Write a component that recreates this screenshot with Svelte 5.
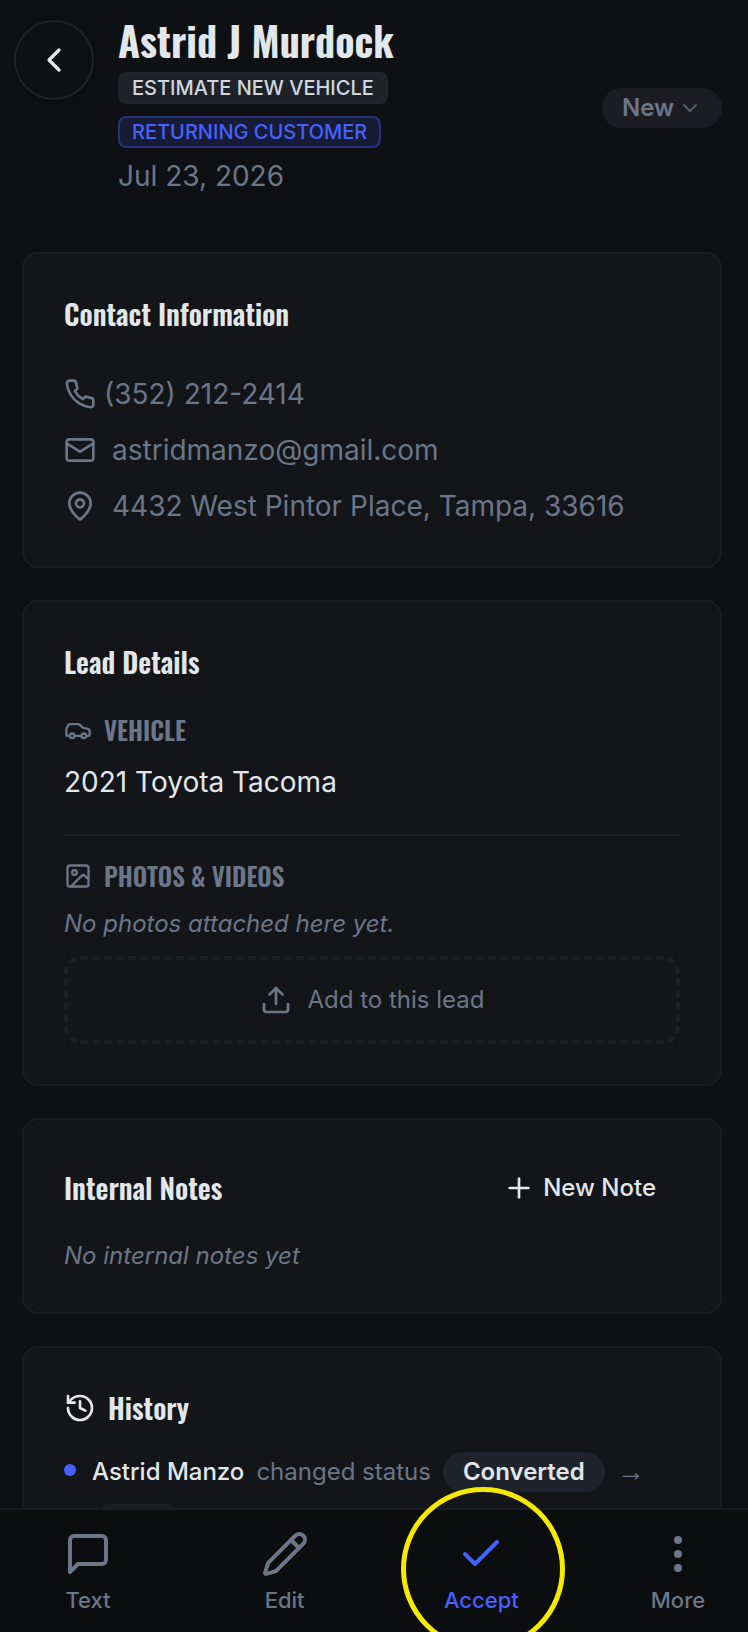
<script>
  let status = "New";
  const statuses = ["New", "Accepted", "Converted", "Closed"];

  const lead = {
    name: "Astrid J Murdock",
    date: "Jul 23, 2026",
    phone: "(352) 212-2414",
    email: "astridmanzo@gmail.com",
    address: "4432 West Pintor Place, Tampa, 33616",
    vehicle: "2021 Toyota Tacoma",
  };
</script>

<svelte:head>
  <title>{lead.name}</title>
</svelte:head>

<header class="top">
  <button class="back" aria-label="Back">
    <svg class="icon" viewBox="0 0 24 24"><path d="m15 18-6-6 6-6" /></svg>
  </button>
  <div class="who">
    <h1>{lead.name}</h1>
    <div class="badges">
      <span class="badge">ESTIMATE NEW VEHICLE</span>
      <span class="badge returning">RETURNING CUSTOMER</span>
    </div>
    <p>{lead.date}</p>
  </div>
  <div class="status">
    <select aria-label="Status" bind:value={status}>
      {#each statuses as s}
        <option value={s}>{s}</option>
      {/each}
    </select>
    <svg class="icon" viewBox="0 0 24 24"><path d="m6 9 6 6 6-6" /></svg>
  </div>
</header>

<main>
  <section class="card">
    <h2>Contact Information</h2>
    <div class="contact">
      <a class="phone" href="tel:3522122414">
        <svg class="icon" viewBox="0 0 24 24"><path d="M22 16.92v3a2 2 0 0 1-2.18 2 19.79 19.79 0 0 1-8.63-3.07 19.5 19.5 0 0 1-6-6 19.79 19.79 0 0 1-3.07-8.67A2 2 0 0 1 4.11 2h3a2 2 0 0 1 2 1.72 12.84 12.84 0 0 0 .7 2.81 2 2 0 0 1-.45 2.11L8.09 9.91a16 16 0 0 0 6 6l1.27-1.27a2 2 0 0 1 2.11-.45 12.84 12.84 0 0 0 2.81.7A2 2 0 0 1 22 16.92z" /></svg>
        {lead.phone}
      </a>
      <a href="mailto:{lead.email}">
        <svg class="icon" viewBox="0 0 24 24"><rect x="2" y="4" width="20" height="16" rx="2" /><path d="m22 7-8.97 5.7a1.94 1.94 0 0 1-2.06 0L2 7" /></svg>
        {lead.email}
      </a>
      <div class="line">
        <svg class="icon" viewBox="0 0 24 24"><path d="M20 10c0 4.993-5.539 10.193-7.399 11.799a1 1 0 0 1-1.202 0C9.539 20.193 4 14.993 4 10a8 8 0 0 1 16 0" /><circle cx="12" cy="10" r="3" /></svg>
        {lead.address}
      </div>
    </div>
  </section>

  <section class="card">
    <h2>Lead Details</h2>
    <div class="vehicle">
      <h3>
        <svg class="icon" viewBox="0 0 24 24"><path d="M19 17h2c.6 0 1-.4 1-1v-3c0-.9-.7-1.7-1.5-1.9C18.7 10.6 16 10 16 10s-1.3-1.4-2.2-2.3c-.5-.4-1.1-.7-1.8-.7H5c-.6 0-1.1.4-1.4.9l-1.4 2.9A3.7 3.7 0 0 0 2 12v4c0 .6.4 1 1 1h2" /><circle cx="7" cy="17" r="2" /><path d="M9 17h6" /><circle cx="17" cy="17" r="2" /></svg>
        VEHICLE
      </h3>
      <p>{lead.vehicle}</p>
    </div>
    <div class="photos">
      <h3>
        <svg class="icon" viewBox="0 0 24 24"><rect x="3" y="3" width="18" height="18" rx="2" /><circle cx="9" cy="9" r="2" /><path d="m21 15-3.086-3.086a2 2 0 0 0-2.828 0L6 21" /></svg>
        PHOTOS &amp; VIDEOS
      </h3>
      <p class="empty">No photos attached here yet.</p>
      <button class="upload">
        <svg class="icon" viewBox="0 0 24 24"><path d="M21 15v4a2 2 0 0 1-2 2H5a2 2 0 0 1-2-2v-4" /><path d="m17 8-5-5-5 5" /><path d="M12 3v12" /></svg>
        Add to this lead
      </button>
    </div>
  </section>

  <section class="card">
    <div class="notes-head">
      <h2>Internal Notes</h2>
      <button class="new-note">
        <svg class="icon" viewBox="0 0 24 24"><path d="M5 12h14" /><path d="M12 5v14" /></svg>
        New Note
      </button>
    </div>
    <p class="empty">No internal notes yet</p>
  </section>

  <section class="card">
    <h2 class="history-title">
      <svg class="icon" viewBox="0 0 24 24"><path d="M3 12a9 9 0 1 0 9-9 9.75 9.75 0 0 0-6.74 2.74L3 8" /><path d="M3 3v5h5" /><path d="M12 7v5l4 2" /></svg>
      History
    </h2>
    <div class="event">
      <span class="dot"></span>
      <div class="event-text">
        <strong>Astrid Manzo</strong>
        <span>changed status</span>
        <span class="pill converted">Converted</span>
        <span class="arrow">→</span>
        <span class="pill">New</span>
      </div>
    </div>
  </section>
</main>

<nav>
  <button>
    <svg class="icon" viewBox="0 0 24 24"><path d="M21 15a2 2 0 0 1-2 2H7l-4 4V5a2 2 0 0 1 2-2h14a2 2 0 0 1 2 2z" /></svg>
    Text
  </button>
  <button>
    <svg class="icon" viewBox="0 0 24 24"><path d="M21.174 6.812a1 1 0 0 0-3.986-3.987L3.842 16.174a2 2 0 0 0-.5.83l-1.321 4.352a.5.5 0 0 0 .623.622l4.353-1.32a2 2 0 0 0 .83-.497z" /><path d="m15 5 4 4" /></svg>
    Edit
  </button>
  <button class="accept">
    <svg class="icon" viewBox="0 0 24 24"><path d="M20 6 9 17l-5-5" /></svg>
    Accept
    <span class="ring"></span>
  </button>
  <button>
    <svg class="icon" viewBox="0 0 24 24"><circle cx="12" cy="12" r="1" /><circle cx="12" cy="5" r="1" /><circle cx="12" cy="19" r="1" /></svg>
    More
  </button>
</nav>

<style>
  :global(body) {
    background: #0f1013;
    color: #e1e7eb;
    font-family: Inter, "Liberation Sans", sans-serif;
    font-size: 28px;
    line-height: 40px;
  }
  h1,
  h2,
  h3,
  p {
    margin: 0;
  }
  h1,
  h2,
  h3 {
    font-family: Oswald, "Roboto Condensed", "Liberation Sans Narrow", sans-serif;
    font-weight: 600;
  }
  h1 {
    margin-bottom: 4px;
    font-size: 40px;
    font-weight: 700;
    line-height: 40px;
  }
  h2 {
    font-size: 28px;
    line-height: 40px;
  }
  h3 {
    display: flex;
    align-items: center;
    gap: 12px;
    font-size: 25px;
    line-height: 36px;
    color: #6b7689;
  }
  h3 .icon {
    width: 28px;
    height: 28px;
  }
  button,
  select {
    border: none;
    background: none;
    color: inherit;
    font: inherit;
    cursor: pointer;
  }
  a {
    color: inherit;
    text-decoration: none;
  }
  .icon {
    width: 32px;
    height: 32px;
    flex-shrink: 0;
    fill: none;
    stroke: currentColor;
    stroke-width: 2;
    stroke-linecap: round;
    stroke-linejoin: round;
  }

  .top {
    display: flex;
    align-items: flex-start;
    gap: 24px;
    padding: 20px 26px 56px 14px;
  }
  .back {
    box-sizing: border-box;
    display: grid;
    place-items: center;
    width: 80px;
    height: 80px;
    padding: 0;
    border: 2px solid #212329;
    border-radius: 50%;
    box-shadow: 0 4px 8px rgba(0, 0, 0, 0.25);
  }
  .back .icon {
    width: 40px;
    height: 40px;
  }
  .who {
    display: flex;
    flex-direction: column;
    gap: 8px;
    flex: 1;
  }
  .who p {
    color: #6b7689;
  }
  .badges {
    display: flex;
    flex-direction: column;
    align-items: flex-start;
    gap: 12px;
  }
  .badge {
    padding: 0 12px;
    border: 2px solid #20262c;
    border-radius: 8px;
    background: #1e2329;
    color: #d1d5de;
    font-size: 20px;
    font-weight: 500;
    line-height: 28px;
  }
  .returning {
    border-color: #25337c;
    background: #171b35;
    color: #4562ff;
  }
  .status {
    position: relative;
    align-self: center;
    color: #6b7689;
  }
  .status select {
    display: block;
    appearance: none;
    width: 120px;
    height: 40px;
    padding: 0 20px;
    border-radius: 20px;
    background: #1c1d22;
    font-size: 24px;
    font-weight: 600;
  }
  .status .icon {
    position: absolute;
    right: 20px;
    top: 8px;
    width: 24px;
    height: 24px;
    opacity: 0.7;
    pointer-events: none;
  }

  main {
    display: flex;
    flex-direction: column;
    gap: 32px;
    padding: 0 26px 40px 22px;
  }
  .card {
    padding: 40px;
    border: 2px solid #1c1d22;
    border-radius: 16px;
    background: #141519;
  }
  .contact {
    display: flex;
    flex-direction: column;
    gap: 16px;
    margin-top: 40px;
    color: #6b7689;
  }
  .contact a,
  .contact .line {
    display: flex;
    align-items: center;
    gap: 16px;
  }
  .contact .phone {
    gap: 8px;
  }

  .vehicle {
    padding: 30px 0 32px;
    border-bottom: 2px solid #1c1d22;
  }
  .vehicle p {
    margin-top: 14px;
  }
  .photos {
    padding-top: 22px;
  }
  .photos .empty {
    margin: 14px 0 16px;
  }
  .empty {
    color: #6b7689;
    font-size: 24px;
    font-style: italic;
    line-height: 32px;
  }
  .upload {
    display: flex;
    align-items: center;
    justify-content: center;
    gap: 16px;
    width: 100%;
    height: 88px;
    border: 4px dashed #1c1f23;
    border-radius: 16px;
    color: #6b7689;
    font-size: 24px;
  }

  .notes-head {
    display: flex;
    align-items: center;
    justify-content: space-between;
    margin-bottom: 24px;
  }
  .new-note {
    display: flex;
    align-items: center;
    gap: 8px;
    height: 56px;
    padding: 0 24px;
    font-size: 24px;
    font-weight: 500;
  }

  .history-title {
    display: flex;
    align-items: center;
    gap: 12px;
  }
  .event {
    display: flex;
    gap: 16px;
    margin-top: 24px;
    font-size: 24px;
  }
  .dot {
    flex-shrink: 0;
    width: 12px;
    height: 12px;
    margin-top: 12px;
    border-radius: 50%;
    background: #4562ff;
  }
  .event-text {
    display: flex;
    flex-wrap: wrap;
    gap: 12px;
    color: #6b7689;
  }
  .event-text strong {
    color: #e1e7eb;
    font-weight: 500;
  }
  .arrow {
    font-family: "Liberation Sans", sans-serif;
    font-size: 28px;
  }
  .pill {
    padding: 0 20px;
    border-radius: 20px;
    background: #1c1d22;
    font-weight: 600;
  }
  .converted {
    background: #1f242c;
    color: #e1e7eb;
  }

  nav {
    position: fixed;
    left: 0;
    right: 0;
    bottom: 0;
    display: flex;
    justify-content: space-between;
    padding: 20px 22px 16px 40px;
    border-top: 2px solid #1c1d22;
    background: #0c0d0f;
  }
  nav button {
    position: relative;
    display: flex;
    flex-direction: column;
    align-items: center;
    gap: 6px;
    width: 96px;
    padding: 0;
    color: #6b7689;
    font-size: 22px;
    font-weight: 500;
    line-height: 32px;
  }
  nav .icon {
    width: 48px;
    height: 48px;
  }
  nav .accept {
    color: #4562ff;
  }
  /* highlight ring around the accept action */
  .ring {
    position: absolute;
    top: -43px;
    left: -32px;
    width: 154px;
    height: 154px;
    border: 5px solid #f5e900;
    border-radius: 50%;
    pointer-events: none;
  }
</style>
